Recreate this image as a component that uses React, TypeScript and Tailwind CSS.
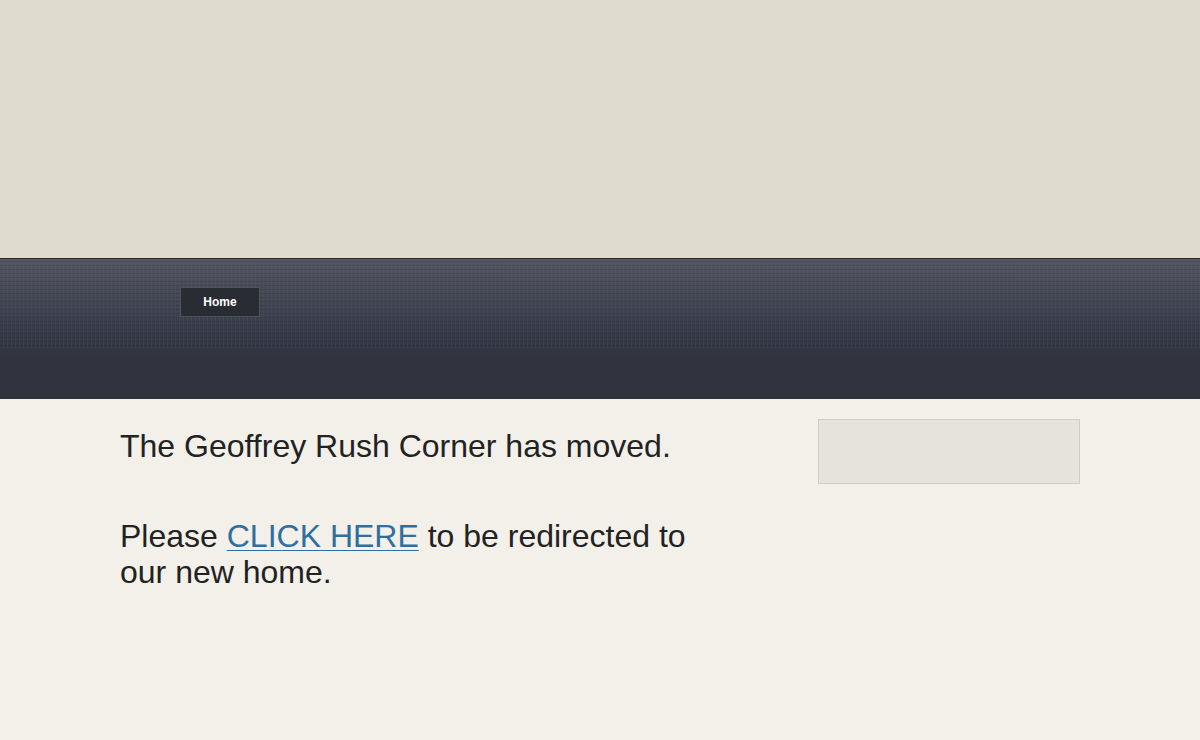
export default function App() {
  return (
    <div className="min-h-[740px] w-full bg-[#f3f0ea] font-['Liberation_Sans',Arial,sans-serif]">
      <div className="h-[258px] bg-[#dfdbcf]" />
      <div className="h-[141px] border-t border-[#2b2b2e] bg-[linear-gradient(to_bottom,#545662_0%,#464956_25%,#363947_55%,#31343f_70%,#31333f_100%)] relative">
        <div className="absolute inset-x-0 top-0 h-[90px] opacity-30 bg-[repeating-linear-gradient(90deg,transparent_0px,transparent_3px,rgba(90,94,108,0.6)_3px,rgba(90,94,108,0.6)_4px),repeating-linear-gradient(0deg,transparent_0px,transparent_3px,rgba(20,22,30,0.5)_3px,rgba(20,22,30,0.5)_4px)]" />
        <div className="relative pl-[180px] pt-[28px]">
          <div className="flex h-[30px] w-[80px] items-center justify-center border border-[#50535c] bg-[#2a2c33] text-[12px] font-bold text-white">
            Home
          </div>
        </div>
      </div>
      <div className="flex pl-[120px]">
        <div className="w-[600px] pt-[29px] text-[32px] leading-[36px] text-[#222222]">
          <p>The Geoffrey Rush Corner has moved.</p>
          <p className="mt-[54px] w-[590px]">
            Please{" "}
            <a href="#" className="text-[#2f6f9f] underline decoration-1 underline-offset-[3px]">
              CLICK HERE
            </a>{" "}
            to be redirected to our new home.
          </p>
        </div>
        <div className="ml-[98px] mt-[20px] h-[65px] w-[262px] border border-[#d2cec6] bg-[#e6e3dc]" />
      </div>
    </div>
  );
}
